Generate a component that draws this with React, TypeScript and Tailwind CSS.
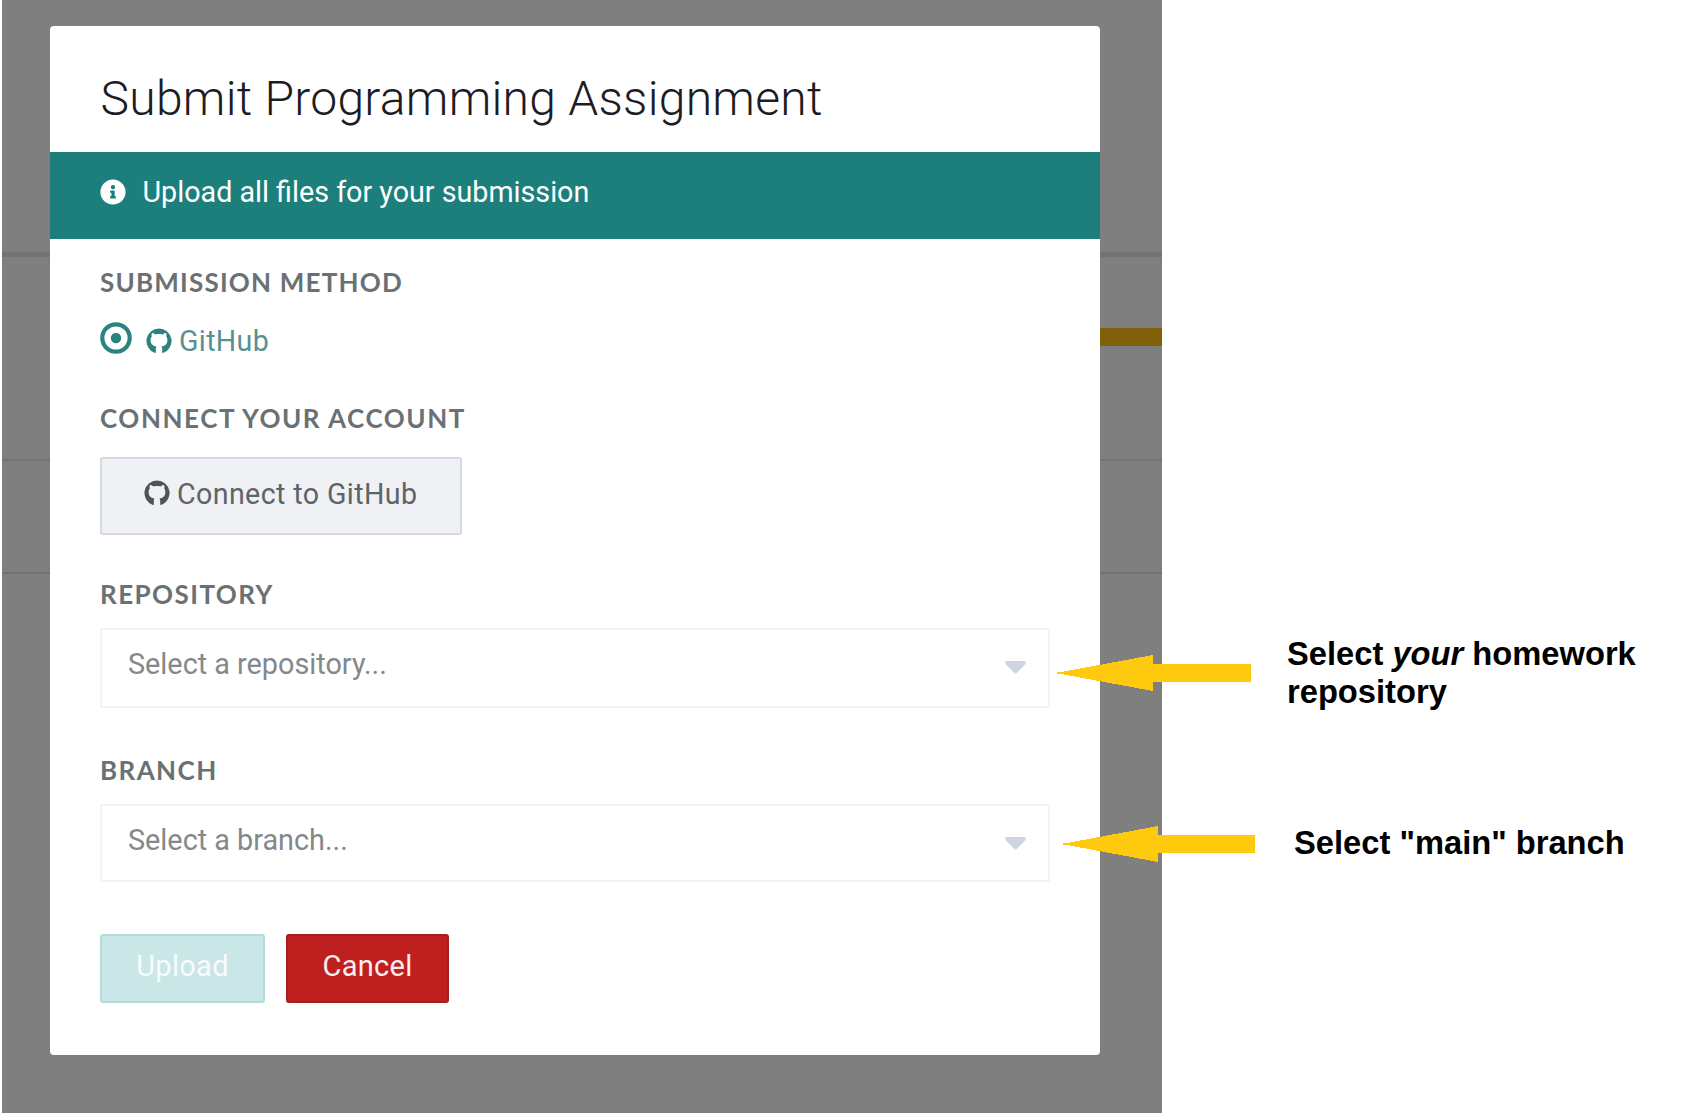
import type { ReactNode } from 'react';
import { FaInfoCircle } from 'react-icons/fa';

function GithubMark({ className }: { className: string }) {
  return (
    <svg className={className} viewBox="0 0 26 26" fill="currentColor">
      <path d="M13 0.4A12.6 12.6 0 0 0 8.9 24.9C9.5 25 9.8 24.6 9.8 24.2V20.6C9.8 19.4 10.1 18.8 10.6 18.4C7.4 18 4.6 16.6 4.6 11.9C4.6 10.5 5 9.4 5.8 8.5C5.5 7.6 5.4 6.4 6 5C7.2 5 8.5 5.7 9.6 6.4C11.8 5.9 14.2 5.9 16.4 6.4C17.5 5.7 18.8 5 20 5C20.6 6.4 20.5 7.6 20.2 8.5C21 9.4 21.4 10.5 21.4 11.9C21.4 16.6 18.6 18 15.4 18.4C15.9 18.8 16.2 19.6 16.2 20.8V24.2C16.2 24.6 16.5 25 17.1 24.9A12.6 12.6 0 0 0 13 0.4Z" />
    </svg>
  );
}

function Label({ className, children }: { className: string; children: ReactNode }) {
  return (
    <div className={`h-[30px] font-['Lato',sans-serif] text-[26px] leading-[30px] font-bold text-[#6a7174] ${className}`}>
      {children}
    </div>
  );
}

function Select({ className, text }: { className: string; text: string }) {
  return (
    <div className={`flex w-[950px] items-start justify-between rounded-[2px] border-2 border-[#f1f3f7] pl-[26px] pr-[22px] ${className}`}>
      <span className="mt-[14px] text-[28.8px] leading-[40px] text-[#85888b]">{text}</span>
      <svg className="mt-[31px] h-[13px] w-[21px]" viewBox="0 0 21 13">
        <path d="M0.5 0H20.5V3L11.2 12.5H9.8L0.5 3Z" fill="#cdd4de" />
      </svg>
    </div>
  );
}

function Arrow({ className }: { className: string }) {
  return (
    <svg className={`absolute h-9 ${className}`} viewBox="0 0 194 36" preserveAspectRatio="none" shapeRendering="crispEdges">
      <path d="M0 17H4L96 0V9H194V27H96V36L4 19H0Z" fill="#ffc90e" />
    </svg>
  );
}

export default function App() {
  return (
    <div className="relative flex h-[1114px] w-[1695px] overflow-hidden bg-white pl-0.5 font-['Roboto',sans-serif] text-[28px]">
      <div className="relative h-[1113px] w-[1160px] shrink-0 bg-[#7f7f7f] pt-[26px] pl-[47.5px]">
        <div className="absolute top-[252px] left-0 h-[5px] w-full bg-[#727377]" />
        <div className="absolute top-[328px] right-0 h-[18px] w-[70px] bg-[#806008]" />
        <div className="absolute top-[459px] left-0 h-[2px] w-full bg-[#727376]" />
        <div className="absolute top-[572px] left-0 h-[2px] w-full bg-[#727376]" />

        <div className="relative h-[1029px] w-[1050px] rounded-[4px] bg-white">
          <h1 className="h-[126px] pt-[45px] pl-[51px] text-[48px] leading-[56px] font-light tracking-[0.28px] text-[#1c1c22]">
            Submit Programming Assignment
          </h1>
          <div className="flex h-[87px] items-start bg-[#1d7f7b] pt-5 pl-[50px] text-white">
            <FaInfoCircle className="mt-[7px] mr-[17px] size-[26px]" />
            <span className="text-[28.7px] leading-[40px]">Upload all files for your submission</span>
          </div>

          <div className="flex flex-col items-start pl-[50.5px]">
            <Label className="mt-[28px] tracking-[1.2px]">SUBMISSION METHOD</Label>
            <div className="mt-6 flex h-10 items-start text-[#2b8380]">
              <svg className="mt-px size-8" viewBox="0 0 32 32">
                <circle cx="16" cy="16" r="13.7" fill="none" stroke="currentColor" strokeWidth="4.2" />
                <circle cx="16" cy="16" r="5.2" fill="currentColor" />
              </svg>
              <GithubMark className="mt-[7px] ml-[14px] size-[26px]" />
              <span className="ml-[7px] text-[28.6px] leading-[40px] tracking-[0.35px] text-[#5a8f92]">GitHub</span>
            </div>

            <Label className="mt-[42px] tracking-[1.55px]">CONNECT YOUR ACCOUNT</Label>
            <button className="mt-[24px] flex h-[78px] w-[362px] items-start rounded-[3px] border-2 border-[#d2d9e1] bg-[#eff1f5] pl-[42px] text-[#5d6469]">
              <GithubMark className="mt-[21px] size-[26px] text-[#4b5459]" />
              <span className="mt-[15px] ml-[7px] text-[28.6px] leading-[40px] tracking-[0.4px]">Connect to GitHub</span>
            </button>

            <Label className="mt-[44px] tracking-[1.45px]">REPOSITORY</Label>
            <Select className="mt-[19px] h-20" text="Select a repository..." />

            <Label className="mt-[47px] tracking-[1.4px]">BRANCH</Label>
            <Select className="mt-[19px] h-[78px]" text="Select a branch..." />

            <div className="mt-[52px] flex gap-[21px] text-[29px] tracking-[0.3px]">
              <button className="h-[69px] w-[165px] rounded-[3px] border-2 border-[#b5dbdc] bg-[#cbe6e7] pb-[3px] text-[#f8fcfc]">
                Upload
              </button>
              <button className="h-[69px] w-[163px] rounded-[3px] border-2 border-[#a02026] bg-[#be2020] pb-[3px] text-[#fbeeee]">
                Cancel
              </button>
            </div>
          </div>
        </div>
      </div>

      <div className="pt-[635px] pl-[125px] font-['Liberation_Sans',Arial,sans-serif] text-[32.7px] leading-[38px] font-bold whitespace-nowrap text-black">
        <p>
          Select <em>your</em> homework
          <br />
          repository
        </p>
        <p className="mt-[113px] pl-[7px]">Select "main" branch</p>
      </div>

      <Arrow className="top-[655px] left-[1057px] w-[194px]" />
      <Arrow className="top-[826px] left-[1063px] w-[192px]" />
    </div>
  );
}
